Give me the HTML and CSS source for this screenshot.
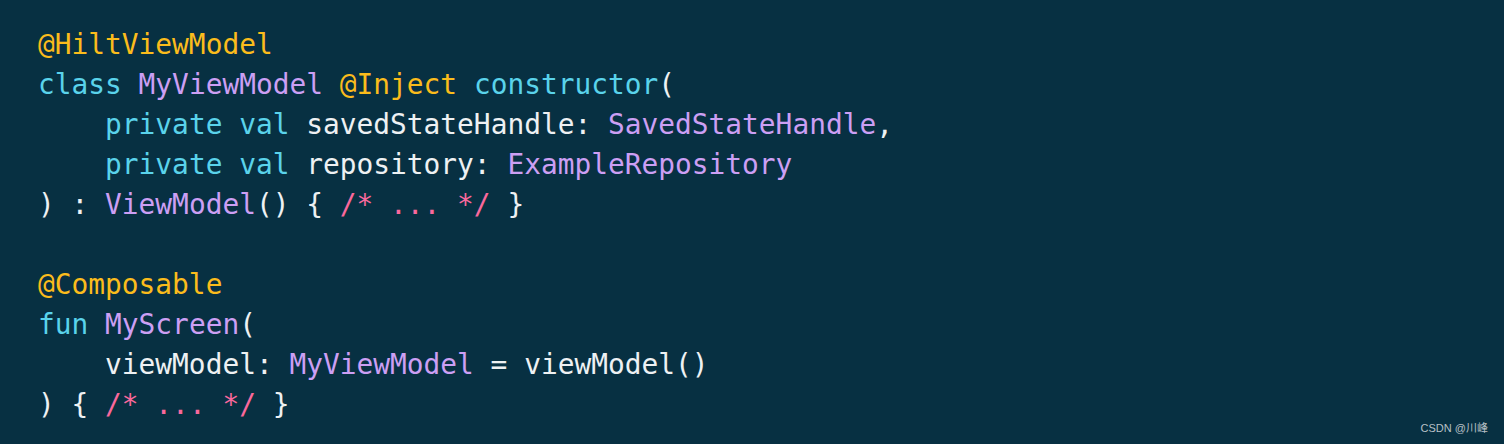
FILE: index.html
```html
<!DOCTYPE html>
<html lang="en">
<head>
<meta charset="utf-8">
<title>Code</title>
<link rel="stylesheet" href="styles.css">
</head>
<body>
<div class="panel">
<pre class="code"><span class="an">@HiltViewModel</span>
<span class="kw">class</span> <span class="ty">MyViewModel</span> <span class="an">@Inject</span> <span class="kw">constructor</span>(
    <span class="kw">private</span> <span class="kw">val</span> savedStateHandle: <span class="ty">SavedStateHandle</span>,
    <span class="kw">private</span> <span class="kw">val</span> repository: <span class="ty">ExampleRepository</span>
) : <span class="ty">ViewModel</span>() { <span class="cm">/* ... */</span> }

<span class="an">@Composable</span>
<span class="kw">fun</span> <span class="ty">MyScreen</span>(
    viewModel: <span class="ty">MyViewModel</span> = viewModel()
) { <span class="cm">/* ... */</span> }</pre>
<div class="mark">CSDN @川峰</div>
</div>
</body>
</html>
```

FILE: styles.css
```css
html, body {
  margin: 0;
  padding: 0;
  background: #073042;
}
.panel {
  position: relative;
  width: 1504px;
  height: 444px;
  box-sizing: border-box;
  padding: 25px 0 0 38px;
  overflow: hidden;
}
.code {
  margin: 0;
  font-family: "DejaVu Sans Mono", "Liberation Mono", monospace;
  font-size: 27.85px;
  line-height: 40px;
  color: #eef1f3;
  white-space: pre;
}
.an { color: #fbbc1c; }
.kw { color: #5ad3eb; }
.ty { color: #cc9ff4; }
.cm { color: #f9689c; }
.mark {
  position: absolute;
  right: 16px;
  bottom: 9px;
  font-family: "Liberation Sans", "Noto Sans CJK SC", sans-serif;
  font-size: 11px;
  color: #b7c0c6;
}
```
